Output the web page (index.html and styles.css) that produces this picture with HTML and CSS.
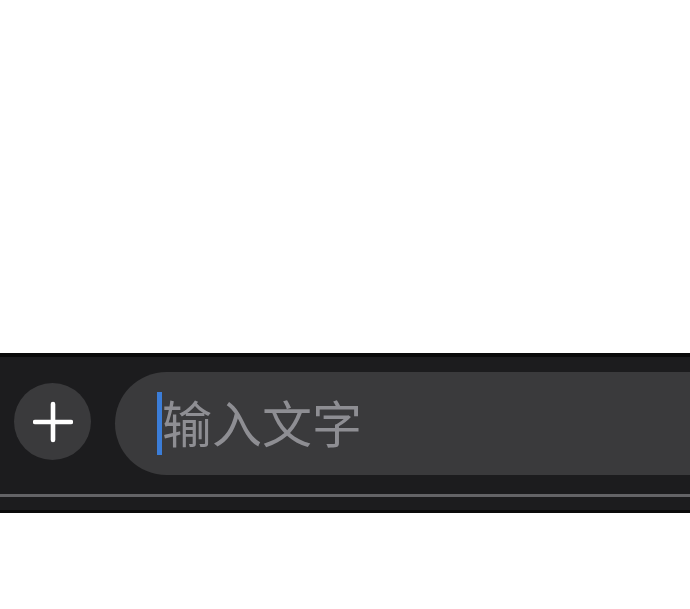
FILE: index.html
```html
<!DOCTYPE html>
<html lang="zh">
<head>
<meta charset="utf-8">
<link rel="stylesheet" href="styles.css">
</head>
<body>
<div class="page">
  <div class="spacer"></div>
  <div class="bar">
    <div class="row">
      <div class="add-btn">
        <svg width="40" height="42" viewBox="0 0 40 42">
          <path d="M20 3 V39 M2 21 H38" stroke="#ffffff" stroke-width="4.6" stroke-linecap="round" fill="none"/>
        </svg>
      </div>
      <div class="field">
        <span class="caret"></span>
        <span class="placeholder">输入文字</span>
      </div>
    </div>
    <div class="rule"></div>
    <div class="strip"></div>
  </div>
</div>
</body>
</html>
```
FILE: styles.css
```css
html, body {
  margin: 0;
  padding: 0;
  background: #ffffff;
}
.page {
  width: 690px;
  height: 609px;
  overflow: hidden;
  display: flex;
  flex-direction: column;
}
.spacer {
  height: 353px;
  flex: none;
}
.bar {
  flex: none;
  background: #1c1c1e;
  border-top: 4px solid #0a0a0a;
  border-bottom: 3px solid #0a0a0a;
  display: flex;
  flex-direction: column;
}
.row {
  height: 137px;
  box-sizing: border-box;
  padding: 15px 0 19px 14px;
  display: flex;
  align-items: center;
  gap: 24px;
}
.add-btn {
  width: 77px;
  height: 77px;
  border-radius: 50%;
  background: #3a3a3c;
  flex: none;
  display: flex;
  align-items: center;
  justify-content: center;
  margin-bottom: 4px;
}
.field {
  flex: 1;
  height: 103px;
  background: #3a3a3c;
  border-radius: 52px 0 0 52px;
  display: flex;
  align-items: center;
  padding-left: 42px;
  margin-right: -10px;
}
.caret {
  width: 5px;
  height: 63px;
  background: #3b7dd8;
  flex: none;
}
.placeholder {
  font-family: "Noto Sans CJK SC", "Noto Sans", sans-serif;
  font-size: 50px;
  line-height: 1;
  color: #8e8e93;
  margin-bottom: 5px;
}
.rule {
  height: 3px;
  background: #636366;
}
.strip {
  height: 13px;
  background: #1c1c1e;
}
```
